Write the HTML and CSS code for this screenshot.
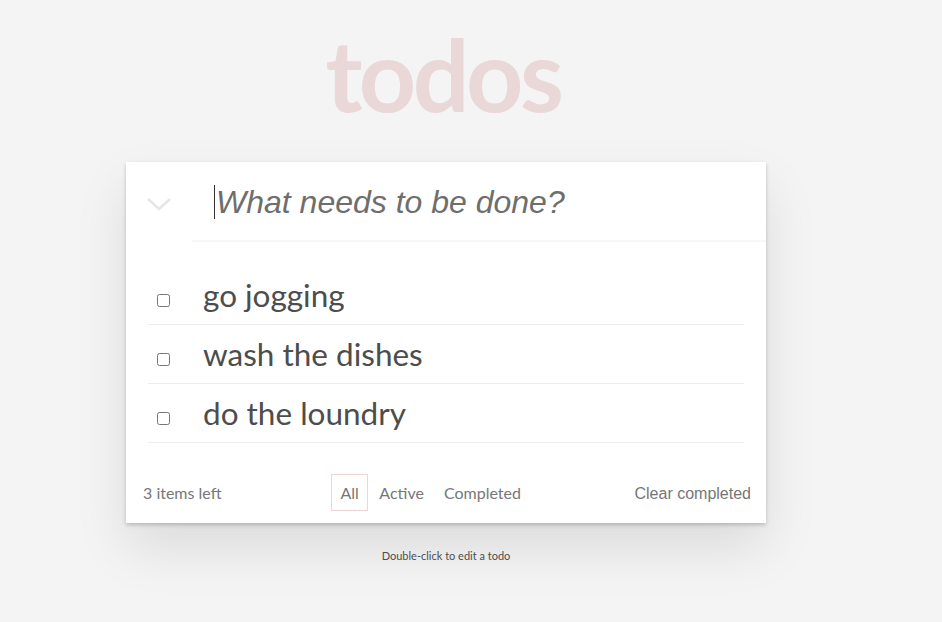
FILE: index.html
```html
<!DOCTYPE html>
<html>
<head>
<meta charset="utf-8">
<link rel="stylesheet" href="styles.css">
</head>
<body>
<div class="page">
  <h1 class="title">todos</h1>
  <section class="card">
    <header class="head">
      <div class="toggle">
        <svg width="26" height="14" viewBox="0 0 26 14"><path d="M2 2 L13 12 L24 2" fill="none" stroke="#e6e6e6" stroke-width="2.5"/></svg>
      </div>
      <div class="input"><span class="caret"></span><span class="ph">What needs to be done?</span></div>
    </header>
    <ul class="list">
      <li class="item"><input type="checkbox" class="check"><span class="label">go jogging</span></li>
      <li class="item"><input type="checkbox" class="check"><span class="label">wash the dishes</span></li>
      <li class="item"><input type="checkbox" class="check"><span class="label">do the loundry</span></li>
    </ul>
    <footer class="foot">
      <span class="count">3 items left</span>
      <nav class="filters">
        <a class="filter selected">All</a>
        <a class="filter">Active</a>
        <a class="filter">Completed</a>
      </nav>
      <span class="clear">Clear completed</span>
    </footer>
  </section>
  <p class="info">Double-click to edit a todo</p>
</div>
</body>
</html>
```
FILE: styles.css
```css
html { min-height: 100%; background: #f4f4f4; }
html, body { margin: 0; padding: 0; }
body { background: #f4f4f4; font-family: Lato, "Liberation Sans", sans-serif; color: #4d4d4d; min-height: 622px; }
.page { width: 640px; margin-left: 126px; display: flex; flex-direction: column; align-items: stretch; }
.title { margin: 8px 0 0; padding-right: 6px; height: 154px; text-align: center; font-family: Lato, sans-serif; font-weight: 700; font-size: 100px; line-height: 130px; color: #ead7d7; letter-spacing: -3.5px; }
.card { background: #fff; box-shadow: 0 2px 4px rgba(0,0,0,0.2), 0 25px 50px rgba(0,0,0,0.1); }
.head { display: flex; height: 80px; }
.toggle { width: 66px; display: flex; align-items: center; justify-content: center; padding-top: 4px; box-sizing: border-box; }
.input { flex: 1; display: flex; align-items: center; padding-left: 22px; box-shadow: inset 0 -2px 1px rgba(0,0,0,0.03); }
.caret { width: 1px; height: 34px; background: #333; margin-right: 1px; }
.ph { font-family: "Liberation Sans", Arial, sans-serif; font-style: italic; font-size: 32px; color: #6e6e6e; }
.list { list-style: none; margin: 24px 22px 0 22px; padding: 0; }
.item { display: flex; align-items: center; height: 58px; border-bottom: 1px solid #ededed; }
.check { margin: 10px 0 0 9px; width: 13px; height: 13px; }
.label { margin-left: 33px; font-size: 31.5px; color: #4d4d4d; }
.foot { display: flex; align-items: center; height: 80px; box-sizing: border-box; padding: 18px 15px 0 17px; font-size: 16px; color: #777; }
.count { width: 188px; }
.filters { display: flex; gap: 2px; }
.filter { padding: 0 8px; height: 35px; line-height: 35px; border: 1px solid transparent; }
.filter.selected { border-color: rgba(175,47,47,0.2); padding: 0 8.5px; }
.clear { margin-left: auto; padding-top: 3px; font-family: "Liberation Sans", Arial, sans-serif; font-size: 16px; }
.info { margin: 26px 0 0; text-align: center; font-size: 11px; color: #4d4d4d; }
```
